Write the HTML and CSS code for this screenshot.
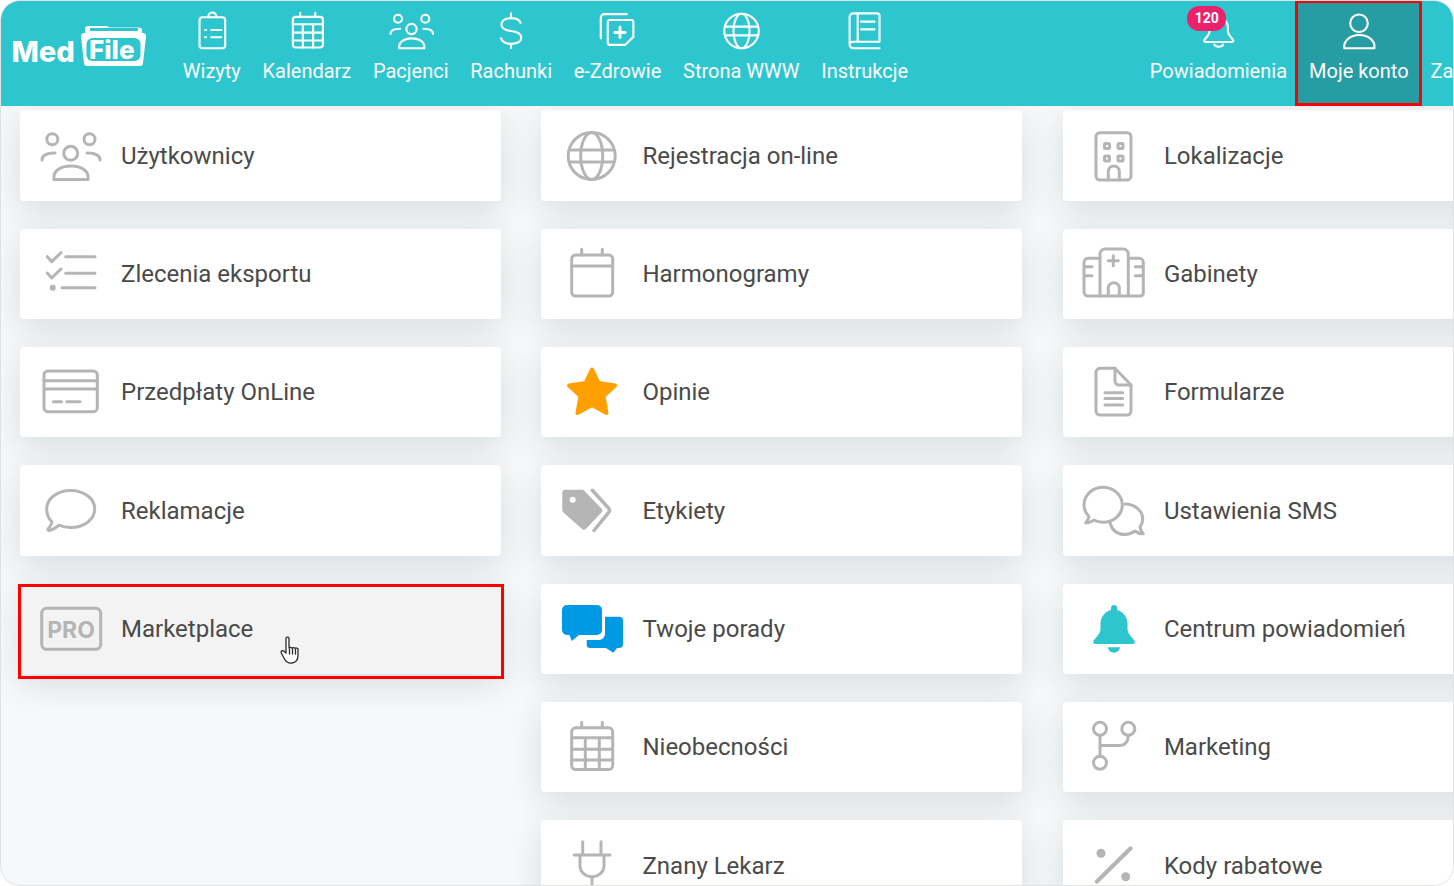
FILE: index.html
```html
<!DOCTYPE html>
<html>
<head>
    <title>MedFile - Moje konto</title>
    <link rel="stylesheet" href="styles.css">
</head>
<body>
    <svg class="sprites" width="0" height="0">
        <symbol id="i-users" viewBox="0 0 60 60" overflow="visible"><circle cx="12.3" cy="13.3" r="5.5"/><circle cx="49.5" cy="13.3" r="5.5"/><circle cx="30.7" cy="27.3" r="7"/><path d="M14 53.5c-1.5-8 6-13.5 17-13.5s18.5 5.500 17 13.500z"/><path d="M2 34c0-5 5-7 13-7M60 34c0-5-5-7-13-7"/></symbol>
        <symbol id="i-clipboard" viewBox="0 0 60 60" overflow="visible"><rect x="13" y="11.300" width="35" height="42.300" rx="4"/><path d="M25 11.300v-1a5.500 5.500 0 0 1 11 0v1M29 28.600h13.600M29 38.600h13.600M20.500 28.600h1.500M20.500 38.600h1.500"/></symbol>
        <symbol id="i-calgrid" viewBox="0 0 60 60" overflow="visible"><rect x="10.700" y="10.800" width="41" height="41.700" rx="4"/><path d="M20.700 5.300v5.500M41.300 5.300v5.500M10.700 20.800h41M10.700 32.200h41M10.700 43h41M24.300 20.800v31.700M38.300 20.800v31.700"/></symbol>
        <symbol id="i-dollar" viewBox="0 0 60 60" overflow="visible"><path d="M43 19c-2-5.500-6.500-6.500-13-6.500-8 0-13 3.500-13 9s5 7.500 13 8.500 14 3.500 14 9-6 8.500-14 8.500c-7 0-12-2-13.500-7.500M30 6v6.500M30 47.500V53.500"/></symbol>
        <symbol id="i-health" viewBox="0 0 60 60" overflow="visible"><path d="M42 7H11.500a5 5 0 0 0-5 5V40"/><path d="M19 15h29a3 3 0 0 1 3 3v20L39.600 49H19a3 3 0 0 1-3-3V18a3 3 0 0 1 3-3z"/><path class="thick" d="M32.700 25v14M25.700 32h14"/></symbol>
        <symbol id="i-globe" viewBox="0 0 60 60" overflow="visible"><circle cx="30.700" cy="30" r="23.500"/><ellipse cx="30.700" cy="30" rx="11" ry="23.500"/><path d="M9 24h43.400M9 36h43.400"/></symbol>
        <symbol id="i-book" viewBox="0 0 60 60" overflow="visible"><path d="M49.800 44.600V9a3 3 0 0 0-3-3H14a5 5 0 0 0-5 5v37.600a5 5 0 0 0 5 5h35.800M49.800 44.600H14a5 5 0 0 0-5 4M20 6v38.600M24.800 17.300H43M24.800 27.700H43"/></symbol>
        <symbol id="i-bell" viewBox="0 0 60 60" overflow="visible"><path d="M31 7c1.300 0 2 .8 2 2v2.500c6.500 1.500 10.500 7.500 10.500 14v5c0 4 3 7 7 11.500 1 1.500.2 3-1.500 3H13c-1.700 0-2.500-1.500-1.500-3 4-4.500 7-7.500 7-11.500v-5c0-6.500 4-12.500 10.500-14V9c0-1.200.7-2 2-2z"/><path d="M25 48.500c1 4 11 4 12 0"/></symbol>
        <symbol id="i-user" viewBox="0 0 60 60" overflow="visible"><circle cx="30" cy="19.500" r="12"/><path d="M10 53.500c-1.500-10 8-18 20.500-18s22 8 20.500 18z"/></symbol>
        <symbol id="i-check" viewBox="0 0 60 60" overflow="visible"><path d="M7.300 12.700l4.400 5 9.300-9M7.300 29l4.400 5 9.300-9M25.700 12.700H55M25.700 29.300H55M22 43.700h33"/><circle class="dot" cx="12.700" cy="43.700" r="3"/></symbol>
        <symbol id="i-card" viewBox="0 0 60 60" overflow="visible"><rect x="4" y="9" width="53.300" height="40.700" rx="4"/><path d="M4 18.700h53.300M4 27h53.300M13.300 39.700h8.400M26.700 39.700H40"/></symbol>
        <symbol id="i-bubble" viewBox="0 0 60 60" overflow="visible"><path d="M12 41C8.500 37.500 6.700 33 6.700 28 6.700 17.500 17.500 9.500 30.700 9.500S54.700 17.500 54.700 28 44 46.500 30.700 46.500c-4.200 0-8.200-.8-11.700-2.300-3 2.300-6.500 4.800-10 5.300-1 .1-1.500-.8-1-1.500 2-2 3.500-4.500 4-7z"/></symbol>
        <symbol id="i-calendar" viewBox="0 0 60 60" overflow="visible"><rect x="10.700" y="11" width="41" height="41" rx="4"/><path d="M20.700 5.300V11M41.300 5.300V11M10.700 22h41"/></symbol>
        <symbol id="i-plug" viewBox="0 0 60 60" overflow="visible"><path d="M21.700 5.700v11.600M40 5.700v11.600M13.300 19h35.700M19 19v11c0 6 5.500 10.700 12 10.700S43 36 43 30V19M31 40.700V52"/></symbol>
        <symbol id="i-building" viewBox="0 0 60 60" overflow="visible"><rect x="13" y="6.700" width="35" height="47.300" rx="4"/><rect x="21.500" y="17.500" width="5" height="5" rx="1"/><rect x="35" y="17.500" width="5" height="5" rx="1"/><rect x="21.500" y="30" width="5" height="5" rx="1"/><rect x="35" y="30" width="5" height="5" rx="1"/><path d="M25.300 54v-8.500a5.500 5.500 0 0 1 11 0V54"/></symbol>
        <symbol id="i-hospital" viewBox="0 0 60 60" overflow="visible"><path d="M17 52V10a5 5 0 0 1 5-5h18.300a5 5 0 0 1 5 5v42"/><path d="M17 14.300H5a4 4 0 0 0-4 4V48a4 4 0 0 0 4 4h52.300a3 3 0 0 0 3-3V18.300a4 4 0 0 0-4-4h-11M1 22.700h8M1 31.700h8M52.300 22.700h8M52.300 31.700h8M30.300 11.700v10M25.300 16.700h10M25.300 52v-7.800a5.500 5.500 0 0 1 11 0V52"/></symbol>
        <symbol id="i-doc" viewBox="0 0 60 60" overflow="visible"><path d="M32 6.300H17a4 4 0 0 0-4 4V49a4 4 0 0 0 4 4h27a4 4 0 0 0 4-4V23z"/><path d="M32 6.300V19a4 4 0 0 0 4 4h12M22 30.700h17.700M22 36.500h17.700M22 43h17.700"/></symbol>
        <symbol id="i-chat2" viewBox="0 0 60 60" overflow="visible"><path d="M6 35.500C3 32.500 1 28.500 1 24 1 14 9.500 6.200 20 6.200S39.300 14 39.300 24 30.500 41.200 20 41.200c-3.500 0-6.500-.7-9.300-2-2.500 1.500-5.500 3-8 2.800 1.700-1.800 2.800-4 3.300-6.500z"/><path d="M42 23c9.500 0 17.700 6.500 17.700 15 0 3-1 5.700-2.700 8 .3 2.500 1.300 4.800 3.300 6.800-3 .2-6-.9-8.300-2.800-2.700 2-6.200 3.500-10 3.500-8 0-13-4.500-15-11.500"/></symbol>
        <symbol id="i-branch" viewBox="0 0 60 60" overflow="visible"><circle cx="17" cy="11.800" r="6.500"/><circle cx="45.300" cy="11.800" r="6.500"/><circle cx="17" cy="45.800" r="6.500"/><path d="M17 18.500v20.800M45.300 18.500c0 6-3 10-9 10H17"/></symbol>
        <symbol id="i-percent" viewBox="0 0 60 60" overflow="visible"><path class="thick" d="M47.700 12.300L13.700 45.700"/><circle class="dot" cx="18" cy="17.300" r="4.500"/><circle class="dot" cx="42.700" cy="40.700" r="4.500"/></symbol>
    </svg>

    <div class="frame">
        <header class="topbar">
            <a class="logo">
                <svg width="150" height="50" viewBox="0 0 150 50">
                    <text class="logo-med" x="10.500" y="40">Med</text>
                    <path class="logo-folder" d="M84 7a3 3 0 0 1 3-3h19l2 1.500h30a3 3 0 0 1 3 3V11h1a3 3 0 0 1 3 3.500l-3 26.500a3 3 0 0 1-3 3H86a3 3 0 0 1-3-3L80 14.500A3 3 0 0 1 83 11h1z"/>
                    <rect class="logo-strip" x="89" y="6" width="48" height="3"/>
                    <rect class="logo-box" x="85.500" y="16" width="54" height="23" rx="6"/>
                    <text class="logo-file" x="88" y="36.500">File</text>
                </svg>
            </a>
            <nav class="nav">
                <a class="nav-item"><svg class="nav-icon"><use href="#i-clipboard"/></svg><span>Wizyty</span></a>
                <a class="nav-item"><svg class="nav-icon"><use href="#i-calgrid"/></svg><span>Kalendarz</span></a>
                <a class="nav-item"><svg class="nav-icon"><use href="#i-users"/></svg><span>Pacjenci</span></a>
                <a class="nav-item"><svg class="nav-icon"><use href="#i-dollar"/></svg><span>Rachunki</span></a>
                <a class="nav-item"><svg class="nav-icon"><use href="#i-health"/></svg><span>e-Zdrowie</span></a>
                <a class="nav-item"><svg class="nav-icon"><use href="#i-globe"/></svg><span>Strona WWW</span></a>
                <a class="nav-item"><svg class="nav-icon"><use href="#i-book"/></svg><span>Instrukcje</span></a>
            </nav>
            <nav class="nav nav-right">
                <a class="nav-item"><b class="badge">120</b><svg class="nav-icon"><use href="#i-bell"/></svg><span>Powiadomienia</span></a>
                <a class="nav-item active"><svg class="nav-icon"><use href="#i-user"/></svg><span>Moje konto</span></a>
                <a class="nav-item"><svg class="nav-icon"></svg><span>Zamknij</span></a>
            </nav>
        </header>

        <main class="tiles">
            <div class="col">
                <a class="card"><svg class="icon"><use href="#i-users"/></svg><span>Użytkownicy</span></a>
                <a class="card"><svg class="icon"><use href="#i-check"/></svg><span>Zlecenia eksportu</span></a>
                <a class="card"><svg class="icon"><use href="#i-card"/></svg><span>Przedpłaty OnLine</span></a>
                <a class="card"><svg class="icon"><use href="#i-bubble"/></svg><span>Reklamacje</span></a>
                <a class="card hovered">
                    <svg class="icon" viewBox="0 0 60 60"><rect x="1.700" y="9.300" width="59" height="41" rx="5"/><text class="pro" x="31" y="38.500">PRO</text></svg>
                    <span>Marketplace</span>
                    <svg class="cursor" width="22" height="28" viewBox="0 0 22 28"><path d="M6 2.500c0-1.800 3-1.800 3 0V12c0-.8 3-1 3 .3 0-.9 3-1 3 .3 0-.8 3-.9 3 .5v6.400c0 4.500-2 7-6 7.500-3.500.3-6-1-7.500-4L1.300 17c-.8-1.800 1.300-3.200 2.700-1.800L6 17z"/><path d="M9.500 13v5M12.500 13v5M15.500 13.500V18"/></svg>
                </a>
            </div>
            <div class="col">
                <a class="card"><svg class="icon"><use href="#i-globe"/></svg><span>Rejestracja on-line</span></a>
                <a class="card"><svg class="icon"><use href="#i-calendar"/></svg><span>Harmonogramy</span></a>
                <a class="card"><svg class="icon star" viewBox="0 0 60 60"><path d="M31 7.500l6.500 13.500L54 23.500 42.500 34l3 17L31 43l-14.500 8 3-17L8 23.500 24.500 21z"/></svg><span>Opinie</span></a>
                <a class="card"><svg class="icon" viewBox="0 0 60 60"><path class="solid" d="M4 8.800h17a3 3 0 0 1 2.200 1l17.500 18a2.500 2.500 0 0 1 0 3.400L25 47.800a3 3 0 0 1-4.200 0L2.200 31.300a3 3 0 0 1-.9-2V11.500a2.700 2.700 0 0 1 2.700-2.700z"/><circle class="hole" cx="11.700" cy="18.800" r="3"/><path class="chevron" d="M31.300 9.300L47.500 27c1.200 1.500 1.200 3.300 0 4.700L33 49.500"/></svg><span>Etykiety</span></a>
                <a class="card"><svg class="icon chat" viewBox="0 0 60 60"><path d="M6 6h30a5 5 0 0 1 5 5v20a5 5 0 0 1-5 5H18l-7.300 6-2.200-6H6a5 5 0 0 1-5-5V11a5 5 0 0 1 5-5z"/><path d="M44 17.700h14a4 4 0 0 1 4 4V45a4 4 0 0 1-4 4h-2l-3.700 4.700L45 49H29a3.300 3.300 0 0 1-3.300-3.300V41H38a6 6 0 0 0 6-6z"/></svg><span>Twoje porady</span></a>
                <a class="card"><svg class="icon"><use href="#i-calgrid"/></svg><span>Nieobecności</span></a>
                <a class="card"><svg class="icon"><use href="#i-plug"/></svg><span>Znany Lekarz</span></a>
            </div>
            <div class="col">
                <a class="card"><svg class="icon"><use href="#i-building"/></svg><span>Lokalizacje</span></a>
                <a class="card"><svg class="icon"><use href="#i-hospital"/></svg><span>Gabinety</span></a>
                <a class="card"><svg class="icon"><use href="#i-doc"/></svg><span>Formularze</span></a>
                <a class="card"><svg class="icon"><use href="#i-chat2"/></svg><span>Ustawienia SMS</span></a>
                <a class="card"><svg class="icon teal" viewBox="0 0 60 60"><path d="M31 6c1.800 0 3 1.300 3 3v2c6.500 1.500 10.500 7.500 10.500 14v5c0 4 3 7 7 11.500 1 1.500.2 3.500-2 3.500H12.500c-2.200 0-3-2-2-3.500 4-4.500 7-7.500 7-11.500v-5c0-6.500 4-12.500 10.500-14V9c0-1.700 1.200-3 3-3z"/><path d="M24.700 48.300h12.300c-.5 3.500-3 5.400-6.200 5.400s-5.600-1.900-6.100-5.400z"/></svg><span>Centrum powiadomień</span></a>
                <a class="card"><svg class="icon"><use href="#i-branch"/></svg><span>Marketing</span></a>
                <a class="card"><svg class="icon"><use href="#i-percent"/></svg><span>Kody rabatowe</span></a>
            </div>
        </main>
    </div>
</body>
</html>
```

FILE: styles.css
```css
body {
    margin: 0;
    background: #fff;
    font-family: Roboto, Arial, sans-serif;
}
.sprites {
    position: absolute;
}
.frame {
    box-sizing: border-box;
    width: 1454px;
    height: 886px;
    border: 1px solid #dfe3e5;
    border-radius: 20px;
    overflow: hidden;
    background: #f6f8f9;
}
.topbar {
    display: flex;
    height: 105px;
    background: #2ec6ce;
    position: relative;
    z-index: 2;
}
.logo {
    flex: none;
    width: 171px;
    padding-top: 21px;
}
.logo svg {
    display: block;
}
.logo-med {
    font-family: Inter, Arial, sans-serif;
    font-weight: 800;
    font-size: 29px;
    fill: #fff;
}
.logo-folder {
    fill: #fff;
}
.logo-strip,
.logo-box {
    fill: #2ec6ce;
}
.logo-file {
    font-family: Inter, Arial, sans-serif;
    font-weight: 800;
    font-size: 26px;
    fill: #fff;
}
.nav {
    display: flex;
    flex: none;
}
.nav-right {
    margin-left: 219.9px;
}
.nav-item {
    position: relative;
    display: flex;
    flex-direction: column;
    align-items: center;
    padding: 8px 10.83px 0;
    color: #fff;
    font-size: 20px;
    line-height: 24px;
    white-space: nowrap;
}
.nav-right .nav-item {
    padding: 8px 11px 0;
}
.nav-icon {
    display: block;
    width: 44px;
    height: 44px;
    margin-bottom: 6px;
    fill: none;
    stroke: #fff;
    stroke-width: 2.9;
    stroke-linecap: round;
    stroke-linejoin: round;
    overflow: visible;
}
.nav-item.active {
    background: #269ca3;
}
.nav-item.active::after {
    content: "";
    position: absolute;
    top: -1px;
    bottom: 0;
    left: -3px;
    right: -2px;
    border: 3px solid #f00;
}
.badge {
    position: absolute;
    z-index: 1;
    top: 4.5px;
    left: 48.5px;
    width: 39px;
    height: 25px;
    border-radius: 12px;
    background: #e9226b;
    color: #fff;
    font-size: 14px;
    line-height: 24px;
    text-align: center;
}
.tiles {
    display: flex;
    gap: 40.45px;
    padding: 4.4px 0 0 19px;
}
.col {
    flex: none;
    width: 481px;
    display: flex;
    flex-direction: column;
    gap: 28.03px;
}
.card {
    position: relative;
    display: flex;
    align-items: center;
    gap: 21px;
    height: 90.33px;
    padding-left: 20px;
    background: #fff;
    border-radius: 4px;
    box-shadow: 0 10px 34px rgba(30, 50, 60, 0.13);
    color: #4a4a4a;
    font-size: 24px;
    white-space: nowrap;
}
.icon {
    flex: none;
    width: 60px;
    height: 60px;
    fill: none;
    stroke: #b5b5b5;
    stroke-width: 3;
    stroke-linecap: round;
    stroke-linejoin: round;
    overflow: visible;
}
.thick {
    stroke-width: 4;
}
.nav-icon .thick {
    stroke-width: 5;
    stroke: #fff;
}
.dot {
    fill: #b5b5b5;
    stroke: none;
}
.pro {
    font-family: Inter, Arial, sans-serif;
    font-weight: 700;
    font-size: 23px;
    text-anchor: middle;
    fill: #b5b5b5;
    stroke: none;
}
.star path {
    fill: #ff9f00;
    stroke: #ff9f00;
    stroke-width: 4;
}
.solid {
    fill: #b5b5b5;
    stroke: none;
}
.hole {
    fill: #fff;
    stroke: none;
}
.chevron {
    stroke-width: 3.5;
}
.chat path {
    fill: #0099e5;
    stroke: none;
}
.teal path {
    fill: #2ec6ce;
    stroke: none;
}
.card.hovered {
    background: #f3f3f3;
}
.card.hovered::after {
    content: "";
    position: absolute;
    top: 0;
    bottom: -5px;
    left: -2px;
    right: -3px;
    border: 3px solid #f00;
}
.cursor {
    position: absolute;
    left: 260px;
    top: 52px;
    fill: #fff;
    stroke: #2b2b2b;
    stroke-width: 1.3;
    stroke-linejoin: round;
    stroke-linecap: round;
}
```
